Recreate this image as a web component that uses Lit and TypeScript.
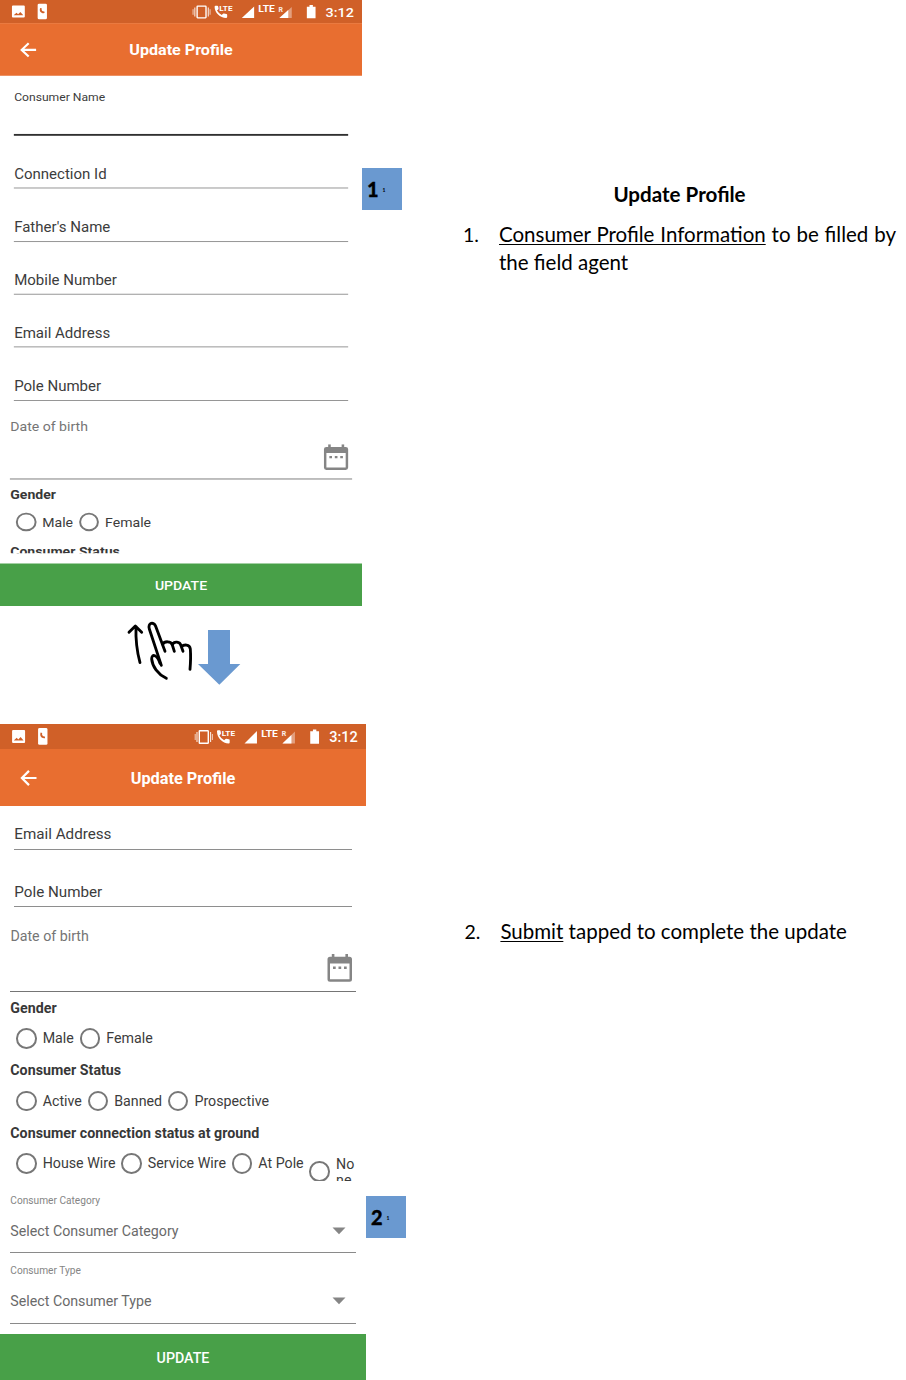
import { LitElement, html, css } from "lit";
import { customElement, property } from "lit/decorators.js";

@customElement("status-bar")
class StatusBar extends LitElement {
  static styles = css`
    :host { display: block; height: 24.7px; background: #d06028; }
    svg { display: block; font-family: Roboto, sans-serif; fill: #fff; }
    .lte { font-size: 9.5px; font-weight: 700; }
    .tiny { font-size: 8px; font-weight: 700; }
    .roam { font-size: 7px; font-weight: 700; }
    .time { font-size: 14.4px; font-weight: 500; }
  `;
  render() {
    return html`<svg width="366" height="24.7" viewBox="0 0 366 24.7">
      <path fill-rule="evenodd" d="M13 6h11q1 0 1 1v11q0 1-1 1H13q-1 0-1-1V7q0-1 1-1zM13.7 16.5h9.8l-3-3.500-2.300 2.400-1.600-1.700z"/>
      <rect x="38" y="4" width="9.400" height="16.800" rx="1.400"/>
      <path d="M40.600 8.600c-1.400 3.400.9 6.300 4.400 5.600l-.2-1.700c-1.900.2-3.300-1.300-2.700-3.600z" fill="#d06028"/>
      <g fill="none" stroke="#fff">
        <rect x="199.300" y="6.700" width="9" height="12.600" rx=".5" stroke-width="1.400"/>
        <path d="M197 8v10M210.600 8v10" stroke-width="1.100" opacity=".85"/>
        <path d="M195.200 10v6M212.400 10v6" stroke-width="1" opacity=".7"/>
      </g>
      <path d="M217 7.200q0-1 .9-1h1.800q.8 0 .9.800l.4 2.300q0 .5-.4.900l-1.200 1.200q1.700 3.200 4.800 4.900l1.300-1.300q.4-.4.900-.3l2.500.5q.8.200.8.900v2.400q0 .9-.9.900C222.500 19.300 217 13.700 217 7.200z"/>
      <text class="tiny" x="221.800" y="11.800" textLength="13.300" lengthAdjust="spacingAndGlyphs">LTE</text>
      <path d="M244.500 19.500L257 7v12.500z"/>
      <text class="lte" x="261.200" y="13" textLength="16.800" lengthAdjust="spacingAndGlyphs">LTE</text>
      <text class="roam" x="281.700" y="12.500" opacity=".9">R</text>
      <path d="M282.500 19.500L295 7.500v12z" opacity=".4"/>
      <path d="M282.500 19.500l9-8.600v8.600z"/>
      <path d="M310.300 7.200h2.700V5.400h3.400v1.800h2.700v12.600h-8.800z"/>
      <text class="time" x="329.300" y="18.100" textLength="28.600" lengthAdjust="spacingAndGlyphs">3:12</text>
    </svg>`;
  }
}

@customElement("phone-screen")
class PhoneScreen extends LitElement {
  @property() view = "top";
  static styles = css`
    :host { display: flex; flex-direction: column; width: 366px; height: 656px; font-family: Roboto, sans-serif; font-size: 14.23px; color: #3c3c3c; background: #fff; }
    * { box-sizing: border-box; }
    .bar { flex: none; height: 57.3px; display: grid; grid-template-columns: 60px 1fr 60px; align-items: center; background: #e86e30; color: #fff; }
    .bar svg { margin: .5px 0 0 20px; display: block; }
    .title { text-align: center; font-size: 16.3px; font-weight: 700; padding-top: 1.5px; }
    .body { flex: 1; min-height: 0; overflow: hidden; }
    .top .body { flex: none; height: 517.500px; }
    .field { height: 57.4px; margin: 0 14.500px 0 14px; border-bottom: 1.200px solid #8e8e8e; display: flex; flex-direction: column; justify-content: flex-end; font-size: 15.2px; line-height: 18px; padding: 0 0 5.300px .3px; }
    .bottom .field:first-child { height: 43.700px; }
    .name { height: 64.800px; border-bottom: 2px solid #303030; justify-content: flex-start; padding-top: 14px; font-size: 12.270px; }
    .date { height: 85.200px; margin: 0 10.500px 0 10px; border-bottom: 1.300px solid #757575; display: flex; justify-content: space-between; color: #757575; padding: 19.500px 3px 0 .4px; line-height: 18px; }
    .date svg { margin-top: 27.300px; display: block; }
    .head { font-weight: 700; line-height: 18px; padding: 6.700px 10.300px 0; height: 31.200px; color: #383838; letter-spacing: .02px; }
    .opts { display: flex; height: 31.300px; padding: 4.600px 0 0 16px; line-height: 20.700px; align-items: flex-start; }
    .opt { display: flex; align-items: center; margin-right: 5.700px; white-space: nowrap; }
    .ring { flex: none; width: 20.700px; height: 20.700px; border: 2px solid #777; border-radius: 50%; margin-right: 6px; }
    .none { height: 28.200px; overflow: hidden; width: 46px; align-items: flex-start; line-height: 16.700px; padding-top: 2.700px; margin: 0; }
    .none .ring { margin-top: 5.300px; margin-right: 6px; }
    .none span { width: 19px; white-space: normal; overflow-wrap: anywhere; height: 25.500px; overflow: hidden; }
    .ground { height: 34.500px; }
    .select { margin: 0 10.500px 0 10px; border-bottom: 1.500px solid #8a8a8a; height: 70.300px; color: #6a6a6a; padding: 11px 0 0 .3px; }
    .cap { font-size: 10.170px; line-height: 14px; color: #858585; }
    .value { display: flex; justify-content: space-between; align-items: center; line-height: 18px; padding: 0 9.500px 0 0; margin-top: 14px; }
    .update { flex: none; margin-top: auto; height: 46.300px; background: #48a048; color: #fff; display: grid; place-items: center; font-weight: 500; padding-top: 1.300px; }
  `;
  field(t: string) { return html`<div class="field">${t}</div>`; }
  opt(t: string) { return html`<div class="opt"><i class="ring"></i>${t}</div>`; }
  select(c: string, v: string) {
    return html`<div class="select"><div class="cap">${c}</div><div class="value">${v}
      <svg width="14" height="8"><path d="M.5.500h13L7 7.300z" fill="#858585"/></svg></div></div>`;
  }
  date() {
    return html`<div class="date">Date of birth
      <svg width="26" height="29" viewBox="0 0 26 29"><path fill="#858585" fill-rule="evenodd" d="M4.800 0h2.600v2.800h11V0H21v2.800h1.500Q25 2.800 25 5.300v19.900q0 2.500-2.500 2.500h-19.500Q.5 27.700.5 25.200V5.300Q.5 2.800 3 2.800h1.800zM3 9.500v15.700h19.500V9.500z"/><path fill="#858585" d="M6 12.500h2.700v2.500H6zM11.500 12.500h2.700v2.500h-2.700zM17 12.500h2.700v2.500H17z"/></svg></div>
      <div class="head">Gender</div>
      <div class="opts">${this.opt("Male")}${this.opt("Female")}</div>
      <div class="head">Consumer Status</div>`;
  }
  render() {
    const top = this.view === "top";
    return html`<status-bar></status-bar>
      <div class="bar">
        <svg width="18" height="18" viewBox="0 0 18 18" fill="none" stroke="#fff" stroke-width="2.200"><path d="M16.500 9H2M9 1.900L1.900 9 9 16.100"/></svg>
        <div class="title">Update Profile</div>
      </div>
      <div class="${top ? "top" : "bottom"}"><div class="body">
        ${top
          ? html`<div class="field name">Consumer Name</div>
              ${["Connection Id", "Father's Name", "Mobile Number", "Email Address", "Pole Number"].map((t) => this.field(t))}
              ${this.date()}`
          : html`${this.field("Email Address")}${this.field("Pole Number")}${this.date()}
              <div class="opts">${["Active", "Banned", "Prospective"].map((t) => this.opt(t))}</div>
              <div class="head">Consumer connection status at ground</div>
              <div class="opts ground">${["House Wire", "Service Wire", "At Pole"].map((t) => this.opt(t))}
                <div class="opt none"><i class="ring"></i><span>None</span></div></div>
              ${this.select("Consumer Category", "Select Consumer Category")}
              ${this.select("Consumer Type", "Select Consumer Type")}`}
      </div></div>
      <div class="update">UPDATE</div>`;
  }
}

@customElement("app-root")
class AppRoot extends LitElement {
  static styles = css`
    :host { display: block; width: 906px; height: 1380px; overflow: hidden; background: #fff; color: #000; font-family: Lato, "Open Sans", sans-serif; }
    .step { display: flex; align-items: flex-start; }
    .first { height: 724px; }
    .second { height: 656px; }
    .shot { flex: none; width: 362px; }
    .second .shot { width: 366px; }
    .frame { height: 606px; overflow: hidden; }
    .squeezed { transform: scale(0.98907, 0.92378); transform-origin: 0 0; }
    .badge { flex: none; width: 40px; height: 42px; margin-top: 168px; background: #6a99d0; display: flex; align-items: center; padding: 0 0 1px 5px; box-sizing: border-box; font-size: 20px; font-weight: 900; gap: 4px; -webkit-text-stroke: 0.3px #000; }
    .badge small { font-size: 5px; padding-top: 3px; -webkit-text-stroke: 0; }
    .second .badge { margin-top: 472px; }
    .gesture { display: block; margin-left: 110px; }
    .notes { margin: 180px 0 0 61px; width: 433px; font-size: 20.500px; line-height: 28px; }
    .second .notes { margin: 193px 0 0 58.400px; }
    h1 { font-size: 20.600px; line-height: 28px; margin: 0 0 12px; font-weight: 700; text-align: center; }
    .item { display: grid; grid-template-columns: 36px 1fr; align-items: baseline; }
    .item span { font-size: 19.500px; }
    .item p { margin: 0; text-align: justify; }
    u { text-underline-offset: 2px; text-decoration-thickness: 1.200px; text-decoration-skip-ink: none; }
  `;
  render() {
    return html`
      <section class="step first">
        <div class="shot">
          <div class="frame"><phone-screen class="squeezed" view="top"></phone-screen></div>
          <svg class="gesture" width="150" height="90" viewBox="0 3 450 270">
            <g fill="none" stroke="#000" stroke-width="8.500" stroke-linecap="round" stroke-linejoin="round">
              <path d="M90 173Q76 122 78 64M57 82L76 63 95 82"/>
              <path d="M154 181L118 72C112 53 132 49 137 64L165 139"/>
              <path d="M158 118C163 108 183 107 187 120L193 139M187 119C192 108 210 109 213 122L219 139M214 126C222 117 239 118 241 132Q243 158 240 193"/>
              <path d="M150 175C142 150 125 144 125 162C127 184 143 207 169 220"/>
            </g>
            <path d="M294 75H360V177H391L328 239 264 177H294z" fill="#6a99d0"/>
          </svg>
        </div>
        <div class="badge">1<small>1</small></div>
        <div class="notes">
          <h1>Update Profile</h1>
          <div class="item"><span>1.</span><p><u>Consumer Profile Information</u> to be filled by the field agent</p></div>
        </div>
      </section>
      <section class="step second">
        <div class="shot"><phone-screen view="bottom"></phone-screen></div>
        <div class="badge">2<small>1</small></div>
        <div class="notes">
          <div class="item"><span>2.</span><p><u>Submit</u> tapped to complete the update</p></div>
        </div>
      </section>`;
  }
}
